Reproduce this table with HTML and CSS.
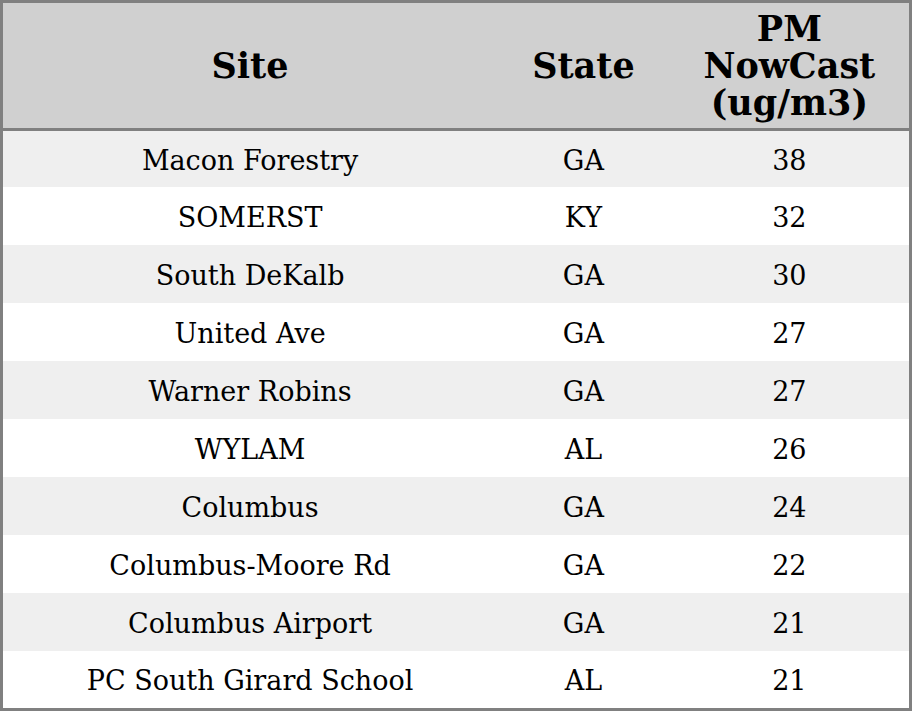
FILE: index.html
```html
<!DOCTYPE html>
<html>
<head>
<meta charset="utf-8">
<link rel="stylesheet" href="styles.css">
</head>
<body>
<table class="grid">
  <colgroup>
    <col class="c-site">
    <col class="c-state">
    <col class="c-pm">
  </colgroup>
  <thead>
    <tr><th>Site</th><th>State</th><th>PM<br>NowCast<br>(ug/m3)</th></tr>
  </thead>
  <tbody>
    <tr><td>Macon Forestry</td><td>GA</td><td>38</td></tr>
    <tr><td>SOMERST</td><td>KY</td><td>32</td></tr>
    <tr><td>South DeKalb</td><td>GA</td><td>30</td></tr>
    <tr><td>United Ave</td><td>GA</td><td>27</td></tr>
    <tr><td>Warner Robins</td><td>GA</td><td>27</td></tr>
    <tr><td>WYLAM</td><td>AL</td><td>26</td></tr>
    <tr><td>Columbus</td><td>GA</td><td>24</td></tr>
    <tr><td>Columbus-Moore Rd</td><td>GA</td><td>22</td></tr>
    <tr><td>Columbus Airport</td><td>GA</td><td>21</td></tr>
    <tr><td>PC South Girard School</td><td>AL</td><td>21</td></tr>
  </tbody>
</table>
</body>
</html>
```
FILE: styles.css
```css
html, body {
  margin: 0;
  padding: 0;
  background: #ffffff;
}
.grid {
  width: 912px;
  height: 711px;
  border-collapse: collapse;
  border: 3px solid #808080;
  table-layout: fixed;
  font-family: "DejaVu Serif", serif;
  color: #000;
}
.c-site { width: 494px; }
.c-state { width: 172px; }
.c-pm { width: 240px; }
.grid th {
  background: #d0d0d0;
  font-weight: bold;
  font-size: 35px;
  line-height: 37px;
  height: 125px;
  padding: 0;
  text-align: center;
  vertical-align: middle;
  border-bottom: 3px solid #808080;
}
.grid td {
  font-size: 27px;
  height: 56px;
  padding: 2px 0 0 0;
  text-align: center;
  vertical-align: middle;
}
.grid tbody tr:first-child td {
  height: 54px;
}
.grid tbody tr:last-child td {
  height: 55px;
}
.grid tbody tr:nth-child(odd) td {
  background: #efefef;
}
```
